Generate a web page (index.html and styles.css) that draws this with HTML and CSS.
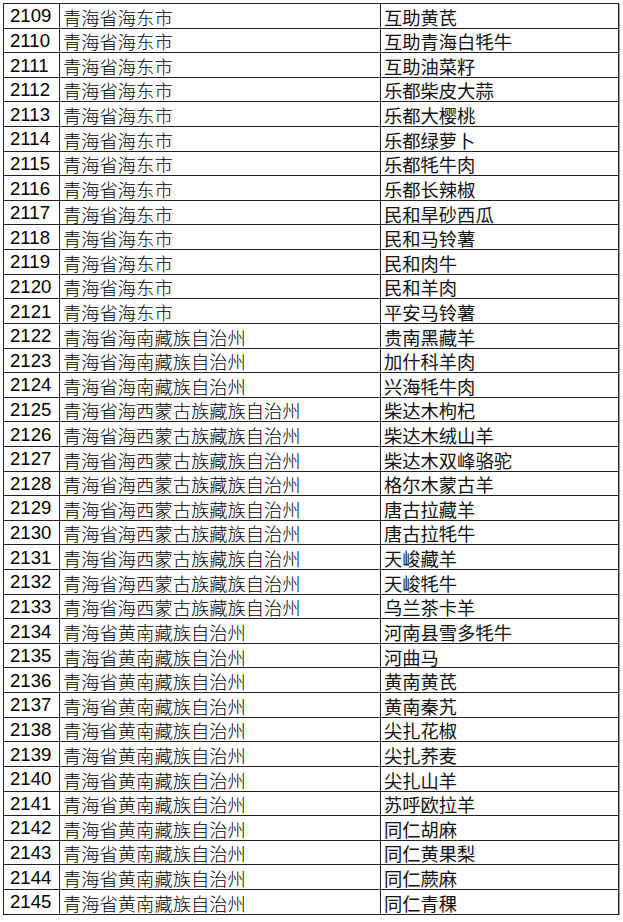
FILE: index.html
```html
<!DOCTYPE html>
<html lang="zh-CN">
<head>
<meta charset="utf-8">
<title>青海省地理标志农产品</title>
<link rel="stylesheet" href="styles.css">
</head>
<body>
<div class="sheet">
<div class="num">2109</div><div class="region">青海省海东市</div><div class="product">互助黄芪</div>
<div class="num">2110</div><div class="region">青海省海东市</div><div class="product">互助青海白牦牛</div>
<div class="num">2111</div><div class="region">青海省海东市</div><div class="product">互助油菜籽</div>
<div class="num">2112</div><div class="region">青海省海东市</div><div class="product">乐都柴皮大蒜</div>
<div class="num">2113</div><div class="region">青海省海东市</div><div class="product">乐都大樱桃</div>
<div class="num">2114</div><div class="region">青海省海东市</div><div class="product">乐都绿萝卜</div>
<div class="num">2115</div><div class="region">青海省海东市</div><div class="product">乐都牦牛肉</div>
<div class="num">2116</div><div class="region">青海省海东市</div><div class="product">乐都长辣椒</div>
<div class="num">2117</div><div class="region">青海省海东市</div><div class="product">民和旱砂西瓜</div>
<div class="num">2118</div><div class="region">青海省海东市</div><div class="product">民和马铃薯</div>
<div class="num">2119</div><div class="region">青海省海东市</div><div class="product">民和肉牛</div>
<div class="num">2120</div><div class="region">青海省海东市</div><div class="product">民和羊肉</div>
<div class="num">2121</div><div class="region">青海省海东市</div><div class="product">平安马铃薯</div>
<div class="num">2122</div><div class="region">青海省海南藏族自治州</div><div class="product">贵南黑藏羊</div>
<div class="num">2123</div><div class="region">青海省海南藏族自治州</div><div class="product">加什科羊肉</div>
<div class="num">2124</div><div class="region">青海省海南藏族自治州</div><div class="product">兴海牦牛肉</div>
<div class="num">2125</div><div class="region">青海省海西蒙古族藏族自治州</div><div class="product">柴达木枸杞</div>
<div class="num">2126</div><div class="region">青海省海西蒙古族藏族自治州</div><div class="product">柴达木绒山羊</div>
<div class="num">2127</div><div class="region">青海省海西蒙古族藏族自治州</div><div class="product">柴达木双峰骆驼</div>
<div class="num">2128</div><div class="region">青海省海西蒙古族藏族自治州</div><div class="product">格尔木蒙古羊</div>
<div class="num">2129</div><div class="region">青海省海西蒙古族藏族自治州</div><div class="product">唐古拉藏羊</div>
<div class="num">2130</div><div class="region">青海省海西蒙古族藏族自治州</div><div class="product">唐古拉牦牛</div>
<div class="num">2131</div><div class="region">青海省海西蒙古族藏族自治州</div><div class="product">天峻藏羊</div>
<div class="num">2132</div><div class="region">青海省海西蒙古族藏族自治州</div><div class="product">天峻牦牛</div>
<div class="num">2133</div><div class="region">青海省海西蒙古族藏族自治州</div><div class="product">乌兰茶卡羊</div>
<div class="num">2134</div><div class="region">青海省黄南藏族自治州</div><div class="product">河南县雪多牦牛</div>
<div class="num">2135</div><div class="region">青海省黄南藏族自治州</div><div class="product">河曲马</div>
<div class="num">2136</div><div class="region">青海省黄南藏族自治州</div><div class="product">黄南黄芪</div>
<div class="num">2137</div><div class="region">青海省黄南藏族自治州</div><div class="product">黄南秦艽</div>
<div class="num">2138</div><div class="region">青海省黄南藏族自治州</div><div class="product">尖扎花椒</div>
<div class="num">2139</div><div class="region">青海省黄南藏族自治州</div><div class="product">尖扎荞麦</div>
<div class="num">2140</div><div class="region">青海省黄南藏族自治州</div><div class="product">尖扎山羊</div>
<div class="num">2141</div><div class="region">青海省黄南藏族自治州</div><div class="product">苏呼欧拉羊</div>
<div class="num">2142</div><div class="region">青海省黄南藏族自治州</div><div class="product">同仁胡麻</div>
<div class="num">2143</div><div class="region">青海省黄南藏族自治州</div><div class="product">同仁黄果梨</div>
<div class="num">2144</div><div class="region">青海省黄南藏族自治州</div><div class="product">同仁蕨麻</div>
<div class="num">2145</div><div class="region">青海省黄南藏族自治州</div><div class="product">同仁青稞</div>
</div>
</body>
</html>
```

FILE: styles.css
```css
html, body {
  margin: 0;
  padding: 0;
  background: #ffffff;
}

.sheet {
  display: grid;
  grid-template-columns: 56px 321px 238px;
  grid-auto-rows: 24.62px;
  width: max-content;
  margin: 3px 0 0 3px;
  border-top: 1px solid #222;
  border-left: 1px solid #222;
  box-shadow: 1px 1px 0 #9a9a9a;
  color: #111;
}

.sheet > div {
  box-sizing: border-box;
  border-right: 1px solid #222;
  border-bottom: 1px solid #222;
  display: flex;
  align-items: center;
  white-space: nowrap;
  overflow: hidden;
}

.num {
  font-family: "Liberation Sans", Arial, sans-serif;
  font-size: 18.6px;
  padding-left: 6px;
  padding-top: 1px;
  color: #000;
}

.region,
.product {
  font-family: "Noto Sans CJK SC", sans-serif;
  font-size: 18.3px;
  line-height: 1;
  padding-left: 3px;
  padding-top: 2px;
}

.region {
  font-weight: 300;
  color: #000;
}
```
